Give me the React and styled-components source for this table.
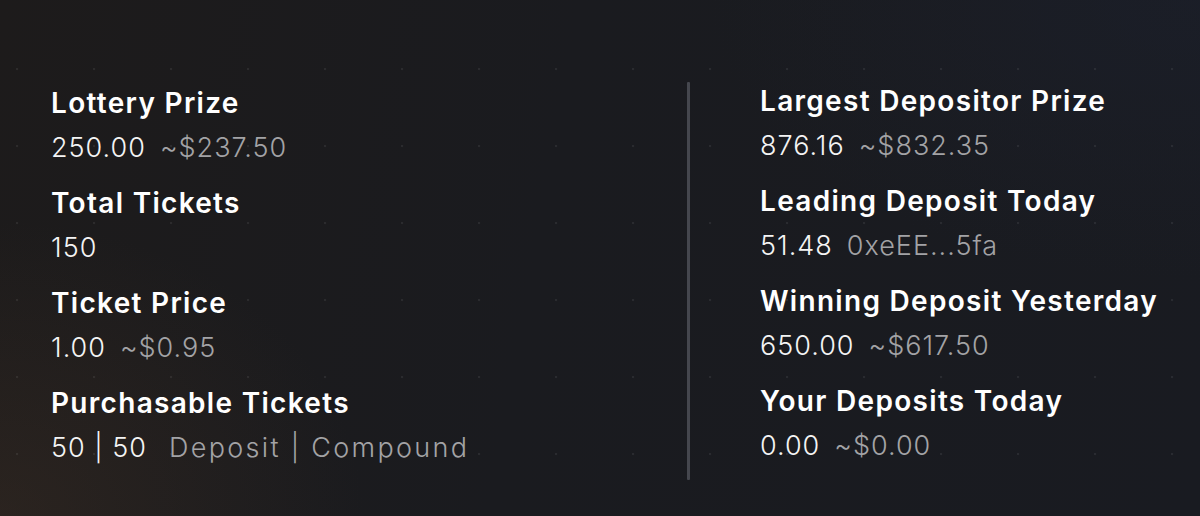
import styled, { createGlobalStyle } from "styled-components";

const GlobalStyle = createGlobalStyle`
    html, body {
        margin: 0;
        padding: 0;
        background: #1a1b1f;
    }
    * {
        box-sizing: border-box;
    }
`

const Page = styled.main`
    position: relative;
    width: 1200px;
    height: 516px;
    overflow: hidden;
    font-family: Inter, "Liberation Sans", sans-serif;
    color: #ffffff;
    background:
        radial-gradient(circle at 1px 1px, rgba(255, 255, 255, 0.07) 1.2px, transparent 1.6px) 16px 68px / 77px 77px,
        radial-gradient(ellipse 520px 420px at 0% 100%, rgba(60, 46, 36, 0.45), transparent 70%),
        radial-gradient(ellipse 700px 400px at 100% 0%, rgba(28, 32, 44, 0.6), transparent 70%),
        linear-gradient(100deg, #1d1b1b 0%, #1a1b1f 45%, #191b21 100%);
    display: grid;
    grid-template-columns: 636px 3px 1fr;
    align-items: start;
    padding: 82px 0 0 51px;
`

const Column = styled.section`
    display: flex;
    flex-direction: column;
    gap: 22px;
    padding-top: ${props => props.$top || 0}px;
    padding-left: ${props => props.$left || 0}px;
`

const Divider = styled.div`
    width: 3px;
    height: 398px;
    background: #45474e;
    border-radius: 1px;
`

const Stat = styled.div`
    display: flex;
    flex-direction: column;
    gap: 12px;
`

const Title = styled.div`
    font-size: 28px;
    line-height: 34px;
    font-weight: 600;
    letter-spacing: 1.3px;
    white-space: nowrap;
`

const Value = styled.div`
    display: flex;
    align-items: baseline;
    font-size: 27px;
    line-height: 32px;
    font-weight: 300;
    letter-spacing: 1px;
    color: #f4f4f4;
    white-space: nowrap;
`

const Sub = styled.span`
    margin-left: ${props => props.$gap || 14}px;
    color: #a3a3a6;
    letter-spacing: ${props => props.$wide ? 2.3 : 1}px;
`

const left = [
    {title: "Lottery Prize", value: "250.00", sub: "~$237.50"},
    {title: "Total Tickets", value: "150"},
    {title: "Ticket Price", value: "1.00", sub: "~$0.95"},
    {title: "Purchasable Tickets", value: "50 | 50", sub: "Deposit | Compound", gap: 22, wide: true},
]

const right = [
    {title: "Largest Depositor Prize", value: "876.16", sub: "~$832.35"},
    {title: "Leading Deposit Today", value: "51.48", sub: "0xeEE...5fa"},
    {title: "Winning Deposit Yesterday", value: "650.00", sub: "~$617.50"},
    {title: "Your Deposits Today", value: "0.00", sub: "~$0.00"},
]

function StatList({items, top, leftPad}) {
    return (
        <Column $top={top} $left={leftPad}>
            {items.map(item => (
                <Stat key={item.title}>
                    <Title>{item.title}</Title>
                    <Value>
                        {item.value}
                        {item.sub && <Sub $gap={item.gap} $wide={item.wide}>{item.sub}</Sub>}
                    </Value>
                </Stat>
            ))}
        </Column>
    )
}

export default function App() {
    return (
        <>
            <GlobalStyle/>
            <Page>
                <StatList items={left} top={4}/>
                <Divider/>
                <StatList items={right} top={2} leftPad={70}/>
            </Page>
        </>
    )
}
